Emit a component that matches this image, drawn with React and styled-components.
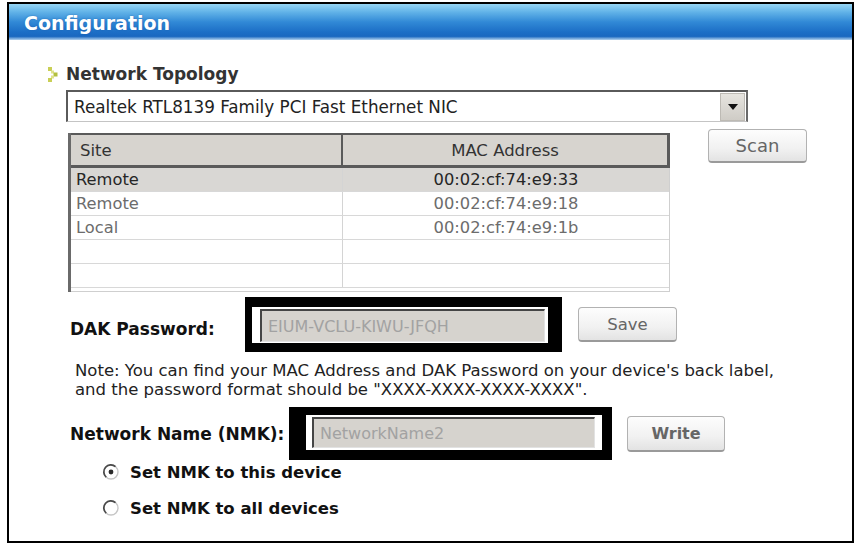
import React from "react";
import styled, { createGlobalStyle } from "styled-components";

const Global = createGlobalStyle`
  html, body { margin: 0; padding: 0; background: #ffffff; }
  body { font-family: "DejaVu Sans", Verdana, sans-serif; }
  * { box-sizing: border-box; }
`;

const Page = styled.div`
  padding: 2px 0 0 7px;
  width: 859px;
  height: 545px;
  background: #fff;
`;

const Frame = styled.div`
  width: 847px;
  height: 541px;
  border: 2px solid #000;
  background: #fff;
  display: flex;
  flex-direction: column;
  overflow: hidden;
`;

const Header = styled.div`
  height: 36px;
  flex: none;
  display: flex;
  align-items: center;
  padding: 2px 0 0 15px;
  background: linear-gradient(
    to bottom,
    #97d6f4 0%,
    #62b3e8 22%,
    #3189d6 50%,
    #1c6ec6 78%,
    #1a68c0 90%,
    #b4d3ef 100%
  );
  color: #fff;
  font-family: "DejaVu Sans", Verdana, sans-serif;
  font-weight: bold;
  font-size: 19px;
  text-shadow: 0 0 2px rgba(20, 80, 160, 0.6);
`;

const TitleRow = styled.div`
  margin: 24px 0 0 39px;
  height: 20px;
  display: flex;
  align-items: center;
  gap: 7px;
  font-weight: bold;
  font-size: 17px;
  color: #333;
`;

const SelectBox = styled.div`
  margin: 6px 0 0 57px;
  width: 682px;
  height: 32px;
  display: flex;
  align-items: center;
  justify-content: space-between;
  border-top: 2px solid #5a5a5a;
  border-left: 2px solid #5a5a5a;
  border-right: 2px solid #6a6a6a;
  border-bottom: 1px solid #c4c4c4;
  padding-left: 6px;
  font-size: 16.8px;
  color: #222;
`;

const DropButton = styled.div`
  width: 25px;
  height: 28px;
  margin-right: 1px;
  display: flex;
  align-items: center;
  justify-content: center;
  background: linear-gradient(to bottom, #e6e4df, #cfccc6);
  border: 1px solid #bdbab4;
`;

const TableRow = styled.div`
  margin: 7px 0 0 59px;
  display: flex;
  align-items: flex-start;
  gap: 38px;
`;

const Table = styled.div`
  margin-top: 4px;
  width: 602px;
  border-left: 3px solid #6a6a6a;
`;

const HeadRow = styled.div`
  display: grid;
  grid-template-columns: 272px 1fr;
  height: 35px;
  background: #d7d4cf;
  border-top: 2px solid #5a5a5a;
  border-bottom: 3px solid #5a5a5a;
  border-right: 3px solid #5a5a5a;
  font-size: 16.5px;
  color: #333;
`;

const HeadCell = styled.div`
  display: flex;
  align-items: center;
  justify-content: ${(p) => (p.$center ? "center" : "flex-start")};
  padding-left: ${(p) => (p.$center ? "0" : "9px")};
  border-right: ${(p) => (p.$divider ? "2px solid #5a5a5a" : "none")};
`;

const Body = styled.div`
  border-right: 1px solid #cfcfcf;
  border-bottom: 1px solid #cfcfcf;
  padding-bottom: 3px;
`;

const Row = styled.div`
  display: grid;
  grid-template-columns: 272px 1fr;
  height: 24px;
  border-bottom: 1px solid #d8d8d8;
  background: ${(p) => (p.$selected ? "#d9d7d4" : "#fff")};
  color: ${(p) => (p.$selected ? "#262626" : "#6c6c6c")};
  font-size: 16.3px;
`;

const Cell = styled.div`
  display: flex;
  align-items: center;
  justify-content: ${(p) => (p.$center ? "center" : "flex-start")};
  padding-left: ${(p) => (p.$center ? "0" : "5px")};
  border-right: ${(p) => (p.$divider ? "1px solid #d4d4d4" : "none")};
`;

const Button = styled.button`
  flex: none;
  width: ${(p) => p.$w || 99}px;
  height: ${(p) => p.$h || 34}px;
  margin-left: ${(p) => p.$ml || 0}px;
  border: 1px solid #b2b2b2;
  border-bottom: 2px solid #9a9a9a;
  border-radius: 4px;
  background: linear-gradient(to bottom, #fdfdfd 0%, #f1f1f1 60%, #e3e3e3 100%);
  font-family: "DejaVu Sans", Verdana, sans-serif;
  font-size: ${(p) => p.$fs || 16}px;
  font-weight: ${(p) => (p.$bold ? "bold" : "normal")};
  color: #666;
  padding: 0;
  display: flex;
  align-items: center;
  justify-content: center;
`;

const FieldRow = styled.div`
  margin: ${(p) => p.$mt}px 0 0 61px;
  display: flex;
  align-items: center;
`;

const Label = styled.div`
  flex: none;
  width: ${(p) => p.$w}px;
  font-weight: bold;
  font-size: 17px;
  color: #111;
  padding-top: ${(p) => p.$pt || 0}px;
`;

const Highlight = styled.div`
  flex: none;
  border-style: solid;
  border-color: #000;
  border-width: ${(p) => p.$bw};
  padding: ${(p) => p.$pad};
  background: #fff;
`;

const Field = styled.input`
  display: block;
  width: ${(p) => p.$w}px;
  height: ${(p) => p.$h}px;
  background: #d6d3ce;
  border-top: 2px solid #454545;
  border-left: 2px solid #454545;
  border-right: 1px solid #e2e2e2;
  border-bottom: 1px solid #e2e2e2;
  padding: 0 0 0 6px;
  font-family: "DejaVu Sans", Verdana, sans-serif;
  font-size: 16px;
  color: #a2a2a2;
  outline: none;
`;

const Note = styled.div`
  margin: 9px 0 0 66px;
  font-size: 16.5px;
  line-height: 19px;
  color: #222;
`;

const RadioGroup = styled.div`
  margin: 0 0 0 93px;
  display: flex;
  flex-direction: column;
  gap: 12px;
`;

const RadioRow = styled.label`
  height: 24px;
  display: flex;
  align-items: center;
  gap: 10px;
  font-weight: bold;
  font-size: 16.5px;
  color: #111;
`;

const Bullet = () => (
  <svg width="11" height="15" viewBox="0 0 11 15">
    <rect x="0" y="0" width="4" height="4" fill="#c9cf55" />
    <rect x="3" y="3.5" width="3" height="3" fill="#dfe28a" />
    <rect x="5.5" y="5.5" width="4" height="4" fill="#b4c03e" />
    <rect x="3" y="8.5" width="3" height="3" fill="#dfe28a" />
    <rect x="0" y="11" width="4" height="4" fill="#c9cf55" />
  </svg>
);

const Arrow = () => (
  <svg width="10" height="6" viewBox="0 0 10 6">
    <path d="M0 0 H10 L5 6 Z" fill="#111" />
  </svg>
);

const Radio = ({ checked }) => (
  <svg width="18" height="18" viewBox="0 0 18 18">
    <circle cx="9" cy="9" r="7" fill="#fff" stroke="#c6c6c6" strokeWidth="1.4" />
    <path d="M13.5 3.6 A7 7 0 0 0 4.2 14.2" fill="none" stroke="#4a4a4a" strokeWidth="1.7" />
    {checked && <circle cx="9" cy="9" r="2.4" fill="#2a2a2a" />}
  </svg>
);

const rows = [
  { site: "Remote", mac: "00:02:cf:74:e9:33", selected: true },
  { site: "Remote", mac: "00:02:cf:74:e9:18" },
  { site: "Local", mac: "00:02:cf:74:e9:1b" },
  { site: "", mac: "" },
  { site: "", mac: "" },
];

export default function App() {
  return (
    <Page>
      <Global />
      <Frame>
        <Header>Configuration</Header>
        <TitleRow>
          <Bullet />
          <span>Network Topology</span>
        </TitleRow>
        <SelectBox>
          <span>Realtek RTL8139 Family PCI Fast Ethernet NIC</span>
          <DropButton>
            <Arrow />
          </DropButton>
        </SelectBox>
        <TableRow>
          <Table>
            <HeadRow>
              <HeadCell $divider>Site</HeadCell>
              <HeadCell $center>MAC Address</HeadCell>
            </HeadRow>
            <Body>
              {rows.map((r, i) => (
                <Row key={i} $selected={r.selected}>
                  <Cell $divider>{r.site}</Cell>
                  <Cell $center>{r.mac}</Cell>
                </Row>
              ))}
            </Body>
          </Table>
          <Button $fs={18}>Scan</Button>
        </TableRow>
        <FieldRow $mt={5}>
          <Label $w={175} $pt={8}>DAK Password:</Label>
          <Highlight $bw="10px 14px 9px 7px" $pad="2px 3px 1px 8px">
            <Field $w={285} $h={33} readOnly value="EIUM-VCLU-KIWU-JFQH" />
          </Highlight>
          <Button $ml={16} $h={35} $fs={16.5}>Save</Button>
        </FieldRow>
        <Note>
          Note: You can find your MAC Address and DAK Password on your device's back label,
          <br />
          and the password format should be "XXXX-XXXX-XXXX-XXXX".
        </Note>
        <FieldRow $mt={8}>
          <Label $w={219}>Network Name (NMK):</Label>
          <Highlight $bw="8px 10px 10px 17px" $pad="2px 7px 2px 6px">
            <Field $w={283} $h={31} readOnly value="NetworkName2" />
          </Highlight>
          <Button $ml={15} $w={98} $h={36} $fs={16} $bold>Write</Button>
        </FieldRow>
        <RadioGroup>
          <RadioRow>
            <Radio checked />
            <span>Set NMK to this device</span>
          </RadioRow>
          <RadioRow>
            <Radio />
            <span>Set NMK to all devices</span>
          </RadioRow>
        </RadioGroup>
      </Frame>
    </Page>
  );
}
